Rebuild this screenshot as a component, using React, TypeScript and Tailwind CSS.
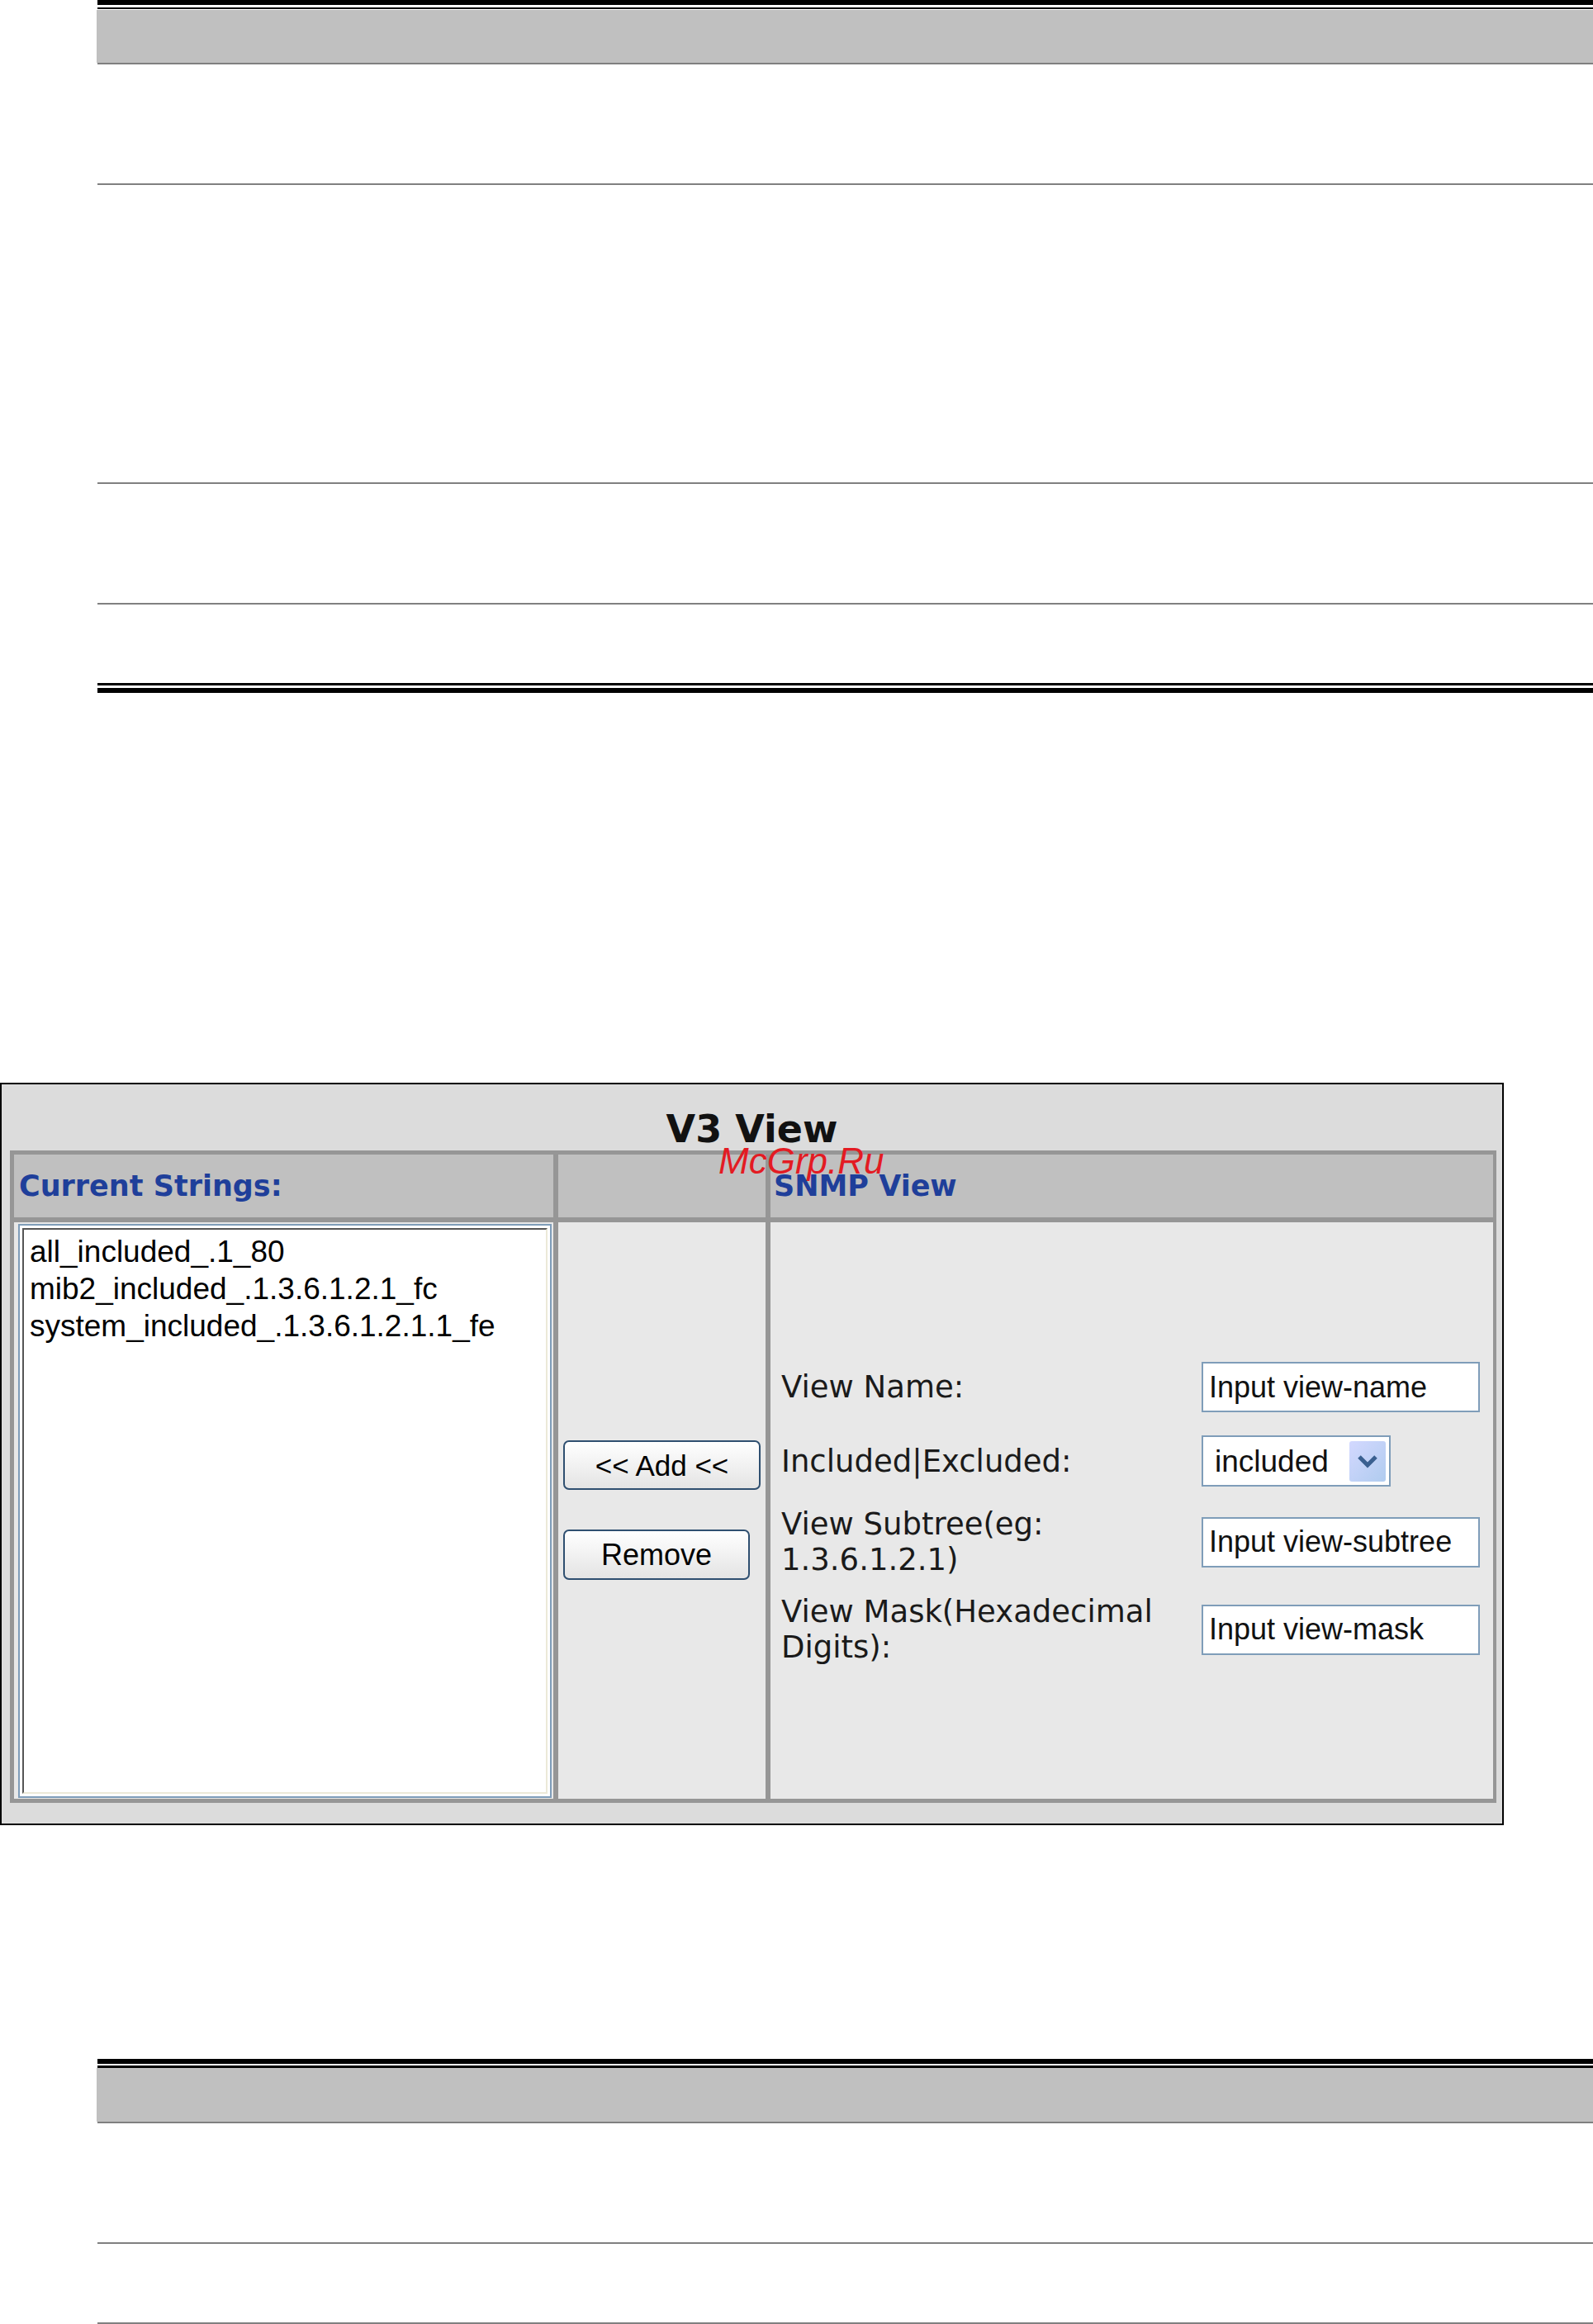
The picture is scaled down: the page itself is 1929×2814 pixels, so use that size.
import React from "react";

function DocTop() {
  return (
    <div className="ml-[118px] flex flex-col">
      <div className="h-[6px] bg-black" />
      <div className="h-[3px]" />
      <div className="h-[2px] bg-black" />
      <div className="h-[1px]" />
      <div className="-ml-[1px] h-[64px] bg-[#c0c0c0]" />
      <div className="h-[2px] bg-[#808080]" />
      <div className="h-[144px]" />
      <div className="h-[2px] bg-[#808080]" />
      <div className="h-[360px]" />
      <div className="h-[2px] bg-[#808080]" />
      <div className="h-[144px]" />
      <div className="h-[2px] bg-[#808080]" />
      <div className="h-[95px]" />
      <div className="h-[3px] bg-black" />
      <div className="h-[3px]" />
      <div className="h-[6px] bg-black" />
    </div>
  );
}

function DocBottom() {
  return (
    <div className="ml-[118px] flex flex-col">
      <div className="h-[6px] bg-black" />
      <div className="h-[2px]" />
      <div className="h-[3px] bg-black" />
      <div className="-ml-[1px] h-[65px] bg-[#c0c0c0]" />
      <div className="h-[2px] bg-[#808080]" />
      <div className="h-[144px]" />
      <div className="h-[2px] bg-[#808080]" />
      <div className="h-[95px]" />
      <div className="h-[2px] bg-[#808080]" />
    </div>
  );
}

const labelCls =
  "font-['DejaVu_Sans',sans-serif] text-[37px] leading-[43px] text-[#1a1a1a] whitespace-nowrap";
const inputCls =
  "flex h-[61px] w-[337px] items-center border-2 border-[#7f9db9] bg-white pl-[7px] font-['Liberation_Sans',Arial,sans-serif] text-[36px] leading-none text-[#111]";

function V3View() {
  return (
    <div className="relative h-[899px] w-[1821px] border-2 border-black bg-[#dcdcdc]">
      <div className="h-[80px] pt-[31px] text-center font-['DejaVu_Sans',sans-serif] text-[46px] font-bold leading-[46px] text-[#111]">
        V3 View
      </div>
      <div className="ml-[10px] grid w-[1800px] grid-cols-[653px_251px_875px] grid-rows-[76px_698px] gap-[6px] bg-[#969696] p-[5px]">
        {/* header row */}
        <div className="flex items-center bg-[#c0c0c0] pl-[6px] font-['DejaVu_Sans',sans-serif] text-[35px] font-bold text-[#1f3f9a]">
          Current Strings:
        </div>
        <div className="bg-[#c0c0c0]" />
        <div className="flex items-center bg-[#c0c0c0] pl-[4px] font-['DejaVu_Sans',sans-serif] text-[35px] font-bold text-[#1f3f9a]">
          SNMP View
        </div>

        {/* body row */}
        <div className="flex bg-[#e8e8e8] pb-[1px] pl-[5px] pr-[2px] pt-[2px]">
          <div className="flex flex-1 border-2 border-[#7f9db9] bg-white p-[3px]">
            <div className="flex-1 border-2 border-b-[#ece9d8] border-l-[#555] border-r-[#ece9d8] border-t-[#555] bg-white pl-[7px] pt-[4px] font-['Liberation_Sans',Arial,sans-serif] text-[37px] leading-[45px] text-black">
              <div>all_included_.1_80</div>
              <div>mib2_included_.1.3.6.1.2.1_fc</div>
              <div>system_included_.1.3.6.1.2.1.1_fe</div>
            </div>
          </div>
        </div>

        <div className="flex flex-col items-start bg-[#e8e8e8] pl-[6px] pt-[264px]">
          <button className="flex h-[60px] w-[239px] items-center justify-center rounded-[7px] border-2 border-[#2f4f70] bg-linear-to-b from-white to-[#e4e4e4] font-['Liberation_Sans',Arial,sans-serif] text-[35px] leading-none text-black">
            &lt;&lt; Add &lt;&lt;
          </button>
          <button className="mt-[48px] flex h-[61px] w-[226px] items-center justify-center rounded-[7px] border-2 border-[#2f4f70] bg-linear-to-b from-white to-[#e4e4e4] font-['Liberation_Sans',Arial,sans-serif] text-[36px] leading-none text-black">
            Remove
          </button>
        </div>

        <div className="flex flex-col bg-[#e8e8e8] pl-[13px] pt-[169px]">
          <div className="flex h-[61px] items-center">
            <div className={`w-[509px] ${labelCls}`}>View Name:</div>
            <div className={inputCls}>Input view-name</div>
          </div>
          <div className="mt-[28px] flex h-[62px] items-center">
            <div className={`w-[509px] ${labelCls}`}>Included|Excluded:</div>
            <div className="flex h-[62px] w-[229px] items-center justify-between border-2 border-[#7f9db9] bg-white pl-[14px] pr-[4px]">
              <span className="font-['Liberation_Sans',Arial,sans-serif] text-[37px] leading-none text-[#111]">
                included
              </span>
              <span className="flex h-[49px] w-[44px] items-center justify-center rounded-[3px] bg-linear-to-br from-[#d3d8ff] to-[#b0ccef]">
                <svg width="28" height="18" viewBox="0 0 28 18">
                  <path d="M4 4 L14 14 L24 4" fill="none" stroke="#3a6090" strokeWidth="5" />
                </svg>
              </span>
            </div>
          </div>
          <div className="mt-[24px] flex h-[86px] items-center">
            <div className={`w-[509px] ${labelCls}`}>
              View Subtree(eg:
              <br />
              1.3.6.1.2.1)
            </div>
            <div className={inputCls}>Input view-subtree</div>
          </div>
          <div className="mt-[20px] flex h-[86px] items-center">
            <div className={`w-[509px] ${labelCls}`}>
              View Mask(Hexadecimal
              <br />
              Digits):
            </div>
            <div className={inputCls}>Input view-mask</div>
          </div>
        </div>
      </div>

      <div className="absolute left-[868px] top-[71px] font-['Liberation_Sans',Arial,sans-serif] text-[44px] italic leading-[44px] text-[#e31b23]">
        McGrp.Ru
      </div>
    </div>
  );
}

export default function App() {
  return (
    <div className="h-[2814px] w-[1929px] overflow-hidden bg-white">
      <DocTop />
      <div className="h-[472px]" />
      <V3View />
      <div className="h-[283px]" />
      <DocBottom />
    </div>
  );
}
